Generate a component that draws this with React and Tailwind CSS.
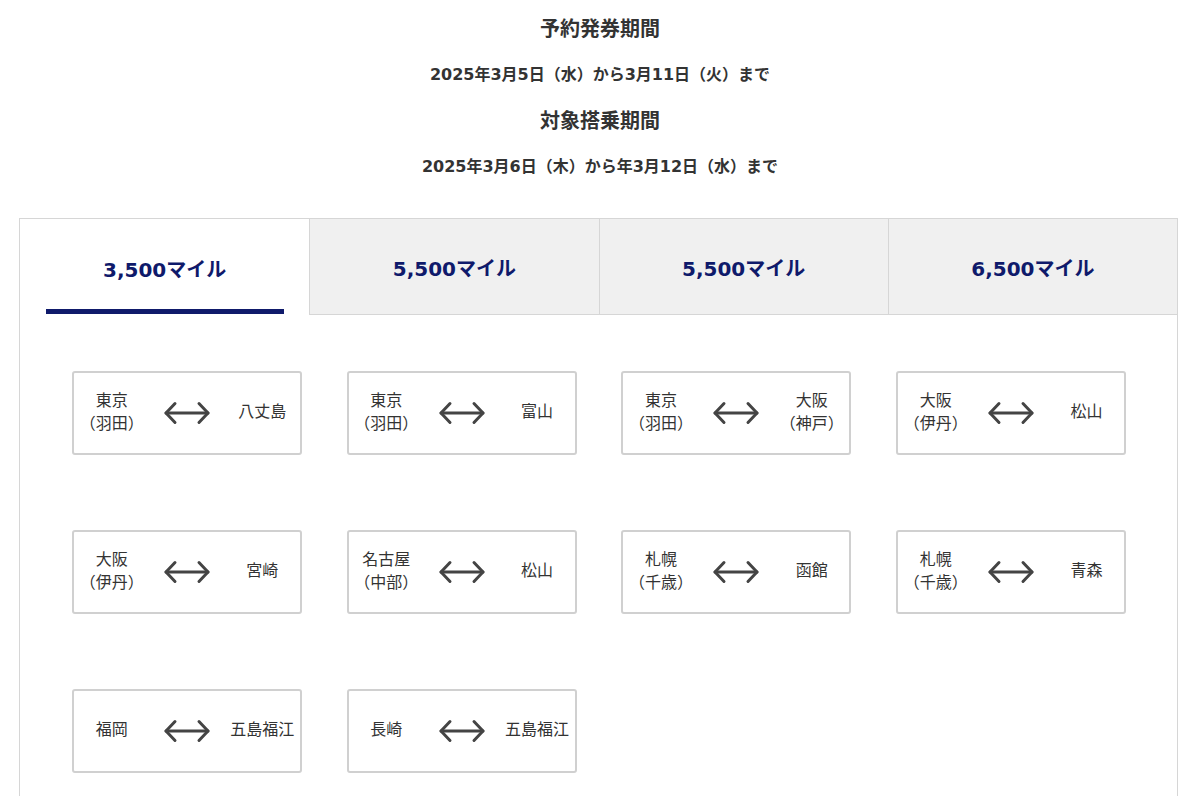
const periods = [
  { title: "予約発券期間", text: "2025年3月5日（水）から3月11日（火）まで" },
  { title: "対象搭乗期間", text: "2025年3月6日（木）から年3月12日（水）まで" },
];

const tabs = ["3,500マイル", "5,500マイル", "5,500マイル", "6,500マイル"];

const routes = [
  { from: ["東京", "（羽田）"], to: ["八丈島"] },
  { from: ["東京", "（羽田）"], to: ["富山"] },
  { from: ["東京", "（羽田）"], to: ["大阪", "（神戸）"] },
  { from: ["大阪", "（伊丹）"], to: ["松山"] },
  { from: ["大阪", "（伊丹）"], to: ["宮崎"] },
  { from: ["名古屋", "（中部）"], to: ["松山"] },
  { from: ["札幌", "（千歳）"], to: ["函館"] },
  { from: ["札幌", "（千歳）"], to: ["青森"] },
  { from: ["福岡"], to: ["五島福江"] },
  { from: ["長崎"], to: ["五島福江"] },
];

function Arrow() {
  return (
    <svg width="48" height="24" viewBox="0 0 48 24" fill="none" stroke="#444" strokeWidth="3" strokeLinecap="round" strokeLinejoin="round">
      <path d="M3 12h42" />
      <path d="M12 2.5 3 12l9 9.5" />
      <path d="M36 2.5 45 12l-9 9.5" />
    </svg>
  );
}

function Place({ lines }) {
  return (
    <div className="flex flex-col items-center text-[16px] leading-[23px] text-[#333]">
      {lines.map((l, i) => (
        <span key={i} className="whitespace-nowrap">{l}</span>
      ))}
    </div>
  );
}

function RouteCard({ route }) {
  return (
    <div className="grid h-[84px] w-[230px] grid-cols-3 items-center rounded-[3px] border-2 border-[#d0d0d0] bg-white pb-[3px]">
      <Place lines={route.from} />
      <div className="flex justify-center pt-[2px]">
        <Arrow />
      </div>
      <Place lines={route.to} />
    </div>
  );
}

export default function App() {
  const active = 0;

  return (
    <div className="min-h-[796px] bg-white pt-[6px] text-[#333]" style={{ fontFamily: '"DejaVu Sans", "Noto Sans CJK JP", sans-serif' }}>
      <div className="flex flex-col items-center">
        {periods.map(p => (
          <div key={p.title} className="flex flex-col items-center">
            <h3 className="flex h-[46px] items-center text-[20px] font-bold">{p.title}</h3>
            <p className="flex h-[46px] items-center text-[16px] font-bold">{p.text}</p>
          </div>
        ))}
      </div>

      <div className="ml-[19px] mt-[28px] w-[1159px] border border-b-0 border-[#d6d6d6]">
        <div className="grid grid-cols-4">
          {tabs.map((t, i) => (
            <div
              key={i}
              className={
                i === active
                  ? "relative flex h-[96px] items-center justify-center bg-white pt-[5px]"
                  : "flex h-[96px] items-center justify-center border-b border-l border-[#d6d6d6] bg-[#f0f0f0] pt-[5px]"
              }
            >
              <span className="text-[20px] font-bold text-[#0f1a6b]">{t}</span>
              {i === active && (
                <div className="absolute bottom-[1px] left-[26px] right-[25px] h-[5px] bg-[#0f1a6b]" />
              )}
            </div>
          ))}
        </div>

        <div className="grid gap-x-[44.7px] gap-y-[75px] pb-[24px] pl-[52px] pt-[56px]" style={{ gridTemplateColumns: "repeat(4, 230px)" }}>
          {routes.map((r, i) => (
            <RouteCard key={i} route={r} />
          ))}
        </div>
      </div>
    </div>
  );
}
